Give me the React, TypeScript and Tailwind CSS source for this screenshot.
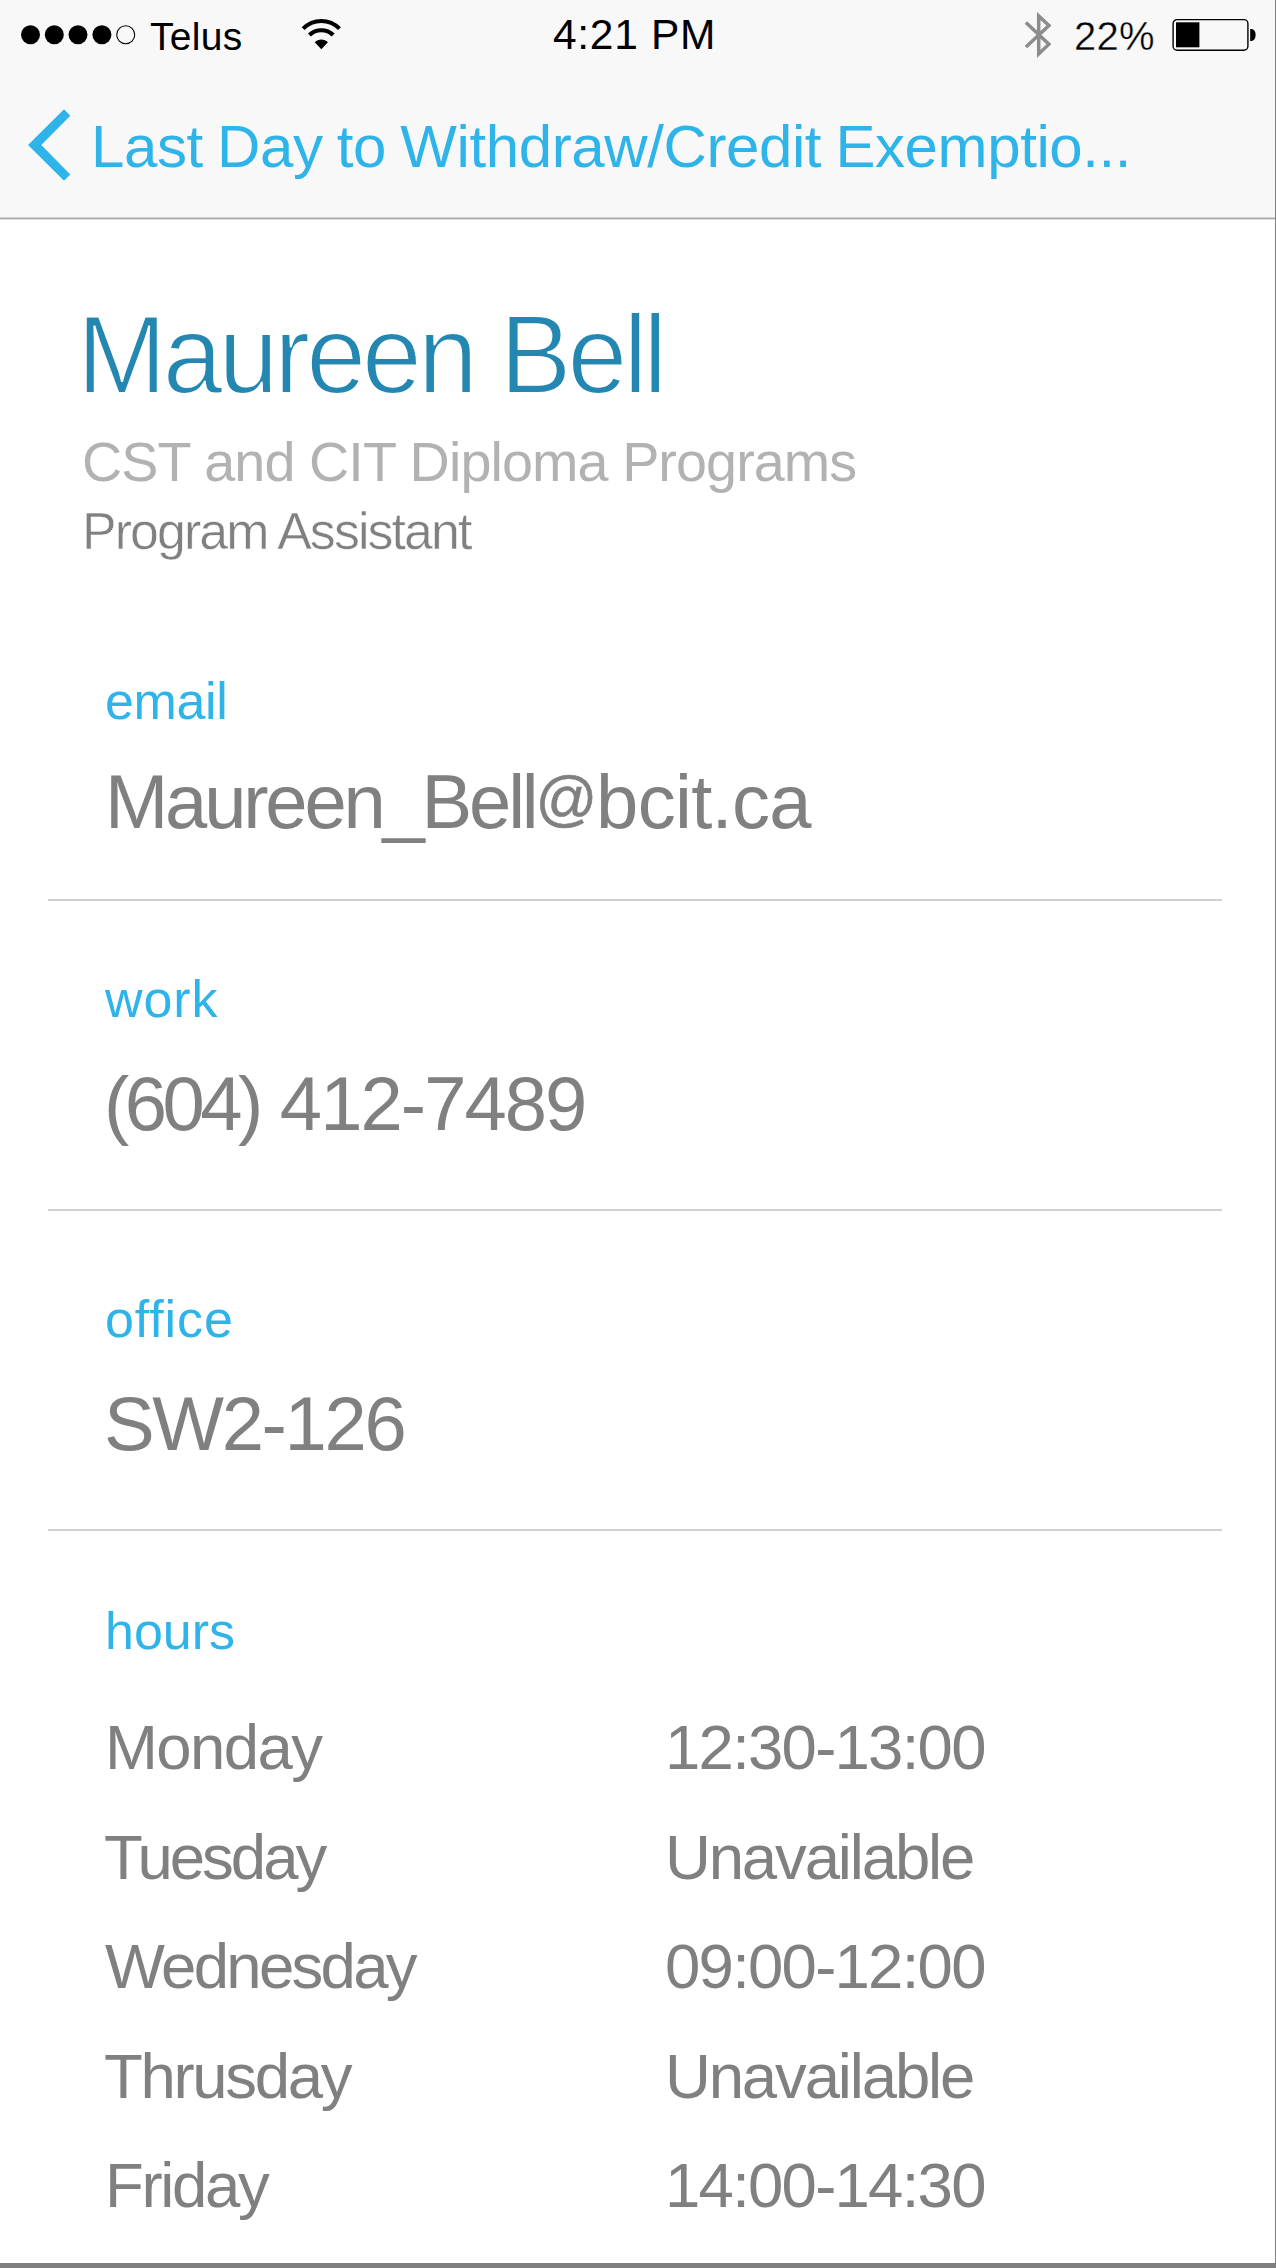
import React from "react";

const fields = [
  {
    label: "email",
    labelClass: "tracking-[-0.35px]",
    value: (
      <>
        <span className="tracking-[-3.2px]">Maureen_Bell</span>
        <span className="align-[9px] text-[61px] leading-none tracking-[-1.4px] [-webkit-text-stroke:0.5px_#808080]">@</span>
        <span className="tracking-[-0.7px]">bcit.ca</span>
      </>
    ),
    valueClass: "mt-[29px]",
    boxClass: "h-[229px]",
  },
  {
    label: "work",
    labelClass: "tracking-[0.9px]",
    value: (
      <>
        <span className="tracking-[-4.5px]">(604)</span>
        <span className="tracking-[-0.2px]"> </span>
        <span className="tracking-[-1.95px]">412-7489</span>
      </>
    ),
    valueClass: "mt-[33px] -ml-px",
    boxClass: "mt-[69px] h-[241px]",
  },
  {
    label: "office",
    labelClass: "tracking-[0.9px]",
    value: "SW2-126",
    valueClass: "mt-[33px] -ml-px tracking-[-2.36px]",
    boxClass: "mt-[79px] h-[241px]",
  },
];

const hours = [
  { day: "Monday", dayClass: "pl-px tracking-[-1.6px]", time: "12:30-13:00", timeClass: "tracking-[-1.75px]" },
  { day: "Tuesday", dayClass: "tracking-[-3px]", time: "Unavailable", timeClass: "tracking-[-2.15px]" },
  { day: "Wednesday", dayClass: "pl-px tracking-[-2.7px]", time: "09:00-12:00", timeClass: "tracking-[-1.75px]" },
  { day: "Thrusday", dayClass: "tracking-[-2.3px]", time: "Unavailable", timeClass: "tracking-[-2.15px]" },
  { day: "Friday", dayClass: "pl-px tracking-[-2.34px]", time: "14:00-14:30", timeClass: "tracking-[-1.75px]" },
];

function SignalDots() {
  return (
    <svg className="mt-[24px] h-[22px] w-[118px]" viewBox="0 0 118 22">
      <circle cx="10.5" cy="10.7" r="9.5" />
      <circle cx="34.3" cy="10.7" r="9.5" />
      <circle cx="58" cy="10.7" r="9.5" />
      <circle cx="81.9" cy="10.7" r="9.5" />
      <circle cx="105.7" cy="10.7" r="9" fill="none" stroke="#000" strokeWidth="1.1" />
    </svg>
  );
}

function Wifi() {
  return (
    <svg className="mt-[18px] h-[32px] w-[40px]" viewBox="0 0 40 32" fill="none" stroke="#000">
      <path d="M2.1 10.6C12.3 0.4 28.3 0.4 38.5 10.6" strokeWidth="4" />
      <path d="M8.4 17.1C15 10.6 25.6 10.6 32.2 17.1" strokeWidth="4.2" />
      <path d="M13.7 24.3C17.4 20.6 23.2 20.6 26.9 24.3L20.3 31.2Z" fill="#000" stroke="none" />
    </svg>
  );
}

function Bluetooth() {
  return (
    <svg className="mt-[10px] h-[50px] w-[30px]" viewBox="0 0 30 50" fill="none" stroke="#8c8c8c" strokeWidth="3.5">
      <path d="M4.9 12.5L27.9 34.2L17.7 44V6L27.9 15.5L4.9 37" />
    </svg>
  );
}

function Battery() {
  return (
    <svg className="mt-[18px] h-[34px] w-[86px]" viewBox="0 0 86 34">
      <rect x="1.1" y="1.6" width="74.8" height="30.6" rx="4" fill="none" stroke="#000" strokeWidth="1.4" />
      <rect x="4" y="4.3" width="23.4" height="25" />
      <path d="M78.2 11H79.8C82.5 11.6 83.6 13.5 83.6 17S82.5 22.4 79.8 23H78.2Z" />
    </svg>
  );
}

export default function App() {
  return (
    <div className="flex h-[2268px] w-[1276px] flex-col border-r border-b-[5px] border-[#808080] bg-white font-['Liberation_Sans',Arial,sans-serif] whitespace-nowrap">
      <header className="h-[220px] border-b border-[#dedede] bg-[#f8f8f8]">
        <div className="h-[219px] border-b border-[#a8a8a8] shadow-[inset_0_-1px_0_#d4d4d4]">
          <div className="flex h-[68px] items-start pl-[20px] text-black">
            <SignalDots />
            <span className="mt-[15px] ml-[12px] w-[151px] text-[39px] leading-[43px] tracking-[0.3px]">Telus</span>
            <Wifi />
            <span className="mt-[11px] ml-[212px] w-[468px] text-[42.5px] leading-[47px] tracking-[0.7px]">4:21 PM</span>
            <Bluetooth />
            <span className="mt-[14px] ml-[23px] w-[98px] text-[40px] leading-[44px] tracking-[0.3px] [-webkit-text-stroke:0.4px_#f8f8f8]">
              22%
            </span>
            <Battery />
          </div>
          <a className="flex items-start pl-[26px] text-[#2fb4ea]">
            <svg className="mt-[40px] h-[76px] w-[48px]" viewBox="0 0 48 76" fill="currentColor">
              <path d="M2 37L38 1.3L44.3 7.7L15.3 37L44.3 66.5L38 72.7Z" />
            </svg>
            <span className="mt-[45px] ml-[17px] text-[60px] leading-[67px] tracking-[-0.4px] [word-spacing:-2px]">
              Last Day to Withdraw/Credit Exemptio...
            </span>
          </a>
        </div>
      </header>

      <section className="pt-[71px]">
        <h1 className="ml-[77px] w-max origin-left scale-x-96 text-[112px] leading-[127px] tracking-[-4.1px] text-[#2387b1] [-webkit-text-stroke:2px_#ffffff]">
          Maureen Bell
        </h1>
        <p className="mt-[13px] ml-[82px] text-[55.7px] leading-[62px] tracking-[-0.9px] text-[#b2b2b2]">
          CST and CIT Diploma Programs
        </p>
        <p className="mt-[9px] ml-[82px] text-[51.8px] leading-[58px] tracking-[-1.87px] text-[#808080] [-webkit-text-stroke:0.5px_#ffffff]">
          Program Assistant
        </p>
      </section>

      <main className="mt-[112px] pr-[53px] pl-[48px]">
        {fields.map((f) => (
          <section key={f.label} className={"border-b-2 border-[#cfd0d4] pl-[57px] " + f.boxClass}>
            <h2 className={"text-[52px] leading-[58px] text-[#2fb4ea] " + f.labelClass}>{f.label}</h2>
            <p className={"h-[85px] text-[76px] leading-[85px] text-[#808080] " + f.valueClass}>{f.value}</p>
          </section>
        ))}
        <section className="mt-[71px] pl-[56px]">
          <h2 className="pl-px text-[52px] leading-[58px] text-[#2fb4ea]">hours</h2>
          <dl className="mt-[52px] grid auto-rows-[109.5px] grid-cols-[561px_1fr] text-[63.5px] leading-[70px] text-[#808080]">
            {hours.map((h) => (
              <React.Fragment key={h.day}>
                <dt className={h.dayClass}>{h.day}</dt>
                <dd className={h.timeClass}>{h.time}</dd>
              </React.Fragment>
            ))}
          </dl>
        </section>
      </main>
    </div>
  );
}
